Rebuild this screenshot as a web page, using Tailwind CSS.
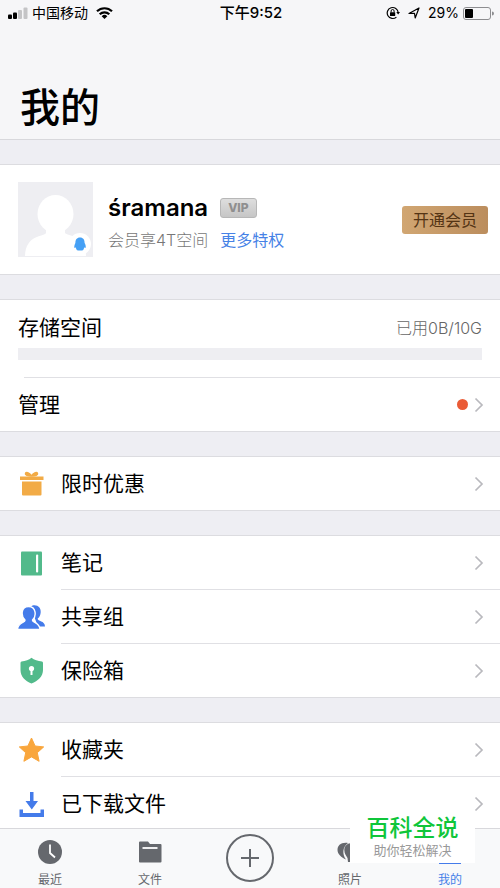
<!DOCTYPE html>
<html lang="zh-CN">
<head>
<meta charset="utf-8">
<meta name="viewport" content="width=device-width, initial-scale=1">
<title>我的</title>
<script src="https://cdn.jsdelivr.net/npm/@tailwindcss/browser@4"></script>
</head>
<body class="bg-[#eeeef3] text-black font-[Inter,'Noto_Sans_CJK_SC',sans-serif]">
<svg class="hidden">
  <symbol id="chevron" viewBox="0 0 10 16"><path d="M1.5 1.5 8 8l-6.500 6.500" fill="none" stroke="#b9b9be" stroke-width="1.700"/></symbol>
</svg>
<div class="flex min-h-screen flex-col">
  <header class="flex h-[140px] flex-col border-b border-[#d8d8dc] bg-[#f6f6f8]">
    <div class="grid grid-cols-[1fr_auto_1fr] items-center pl-2 pr-[6px] text-sm leading-[26px]">
      <div class="flex items-center">
        <svg class="mr-1 h-3 w-5" viewBox="0 0 20 12" aria-hidden="true"><rect y="7.500" width="4" height="4.500" rx="1"/><rect x="5" y="5.500" width="4" height="6.500" rx="1"/><rect x="10" y="3" width="4" height="9" rx="1" fill="#c4c4c6"/><rect x="15.500" y="0.500" width="4" height="11.500" rx="1" fill="#c4c4c6"/></svg>
        <span>中国移动</span>
        <svg class="ml-2 h-3 w-[17px]" viewBox="0 0 17 12" aria-hidden="true"><g fill="none" stroke="#000" stroke-width="2.200"><path d="M1 4.300a10.800 10.800 0 0 1 15 0"/><path d="M3.700 7.300a6.900 6.900 0 0 1 9.600 0"/></g><path d="M5.700 9.200a4 4 0 0 1 5.600 0L8.500 12z"/></svg>
      </div>
      <time class="text-[15px] leading-[26px] font-medium">下午9:52</time>
      <div class="flex items-center justify-end">
        <svg class="mr-2 h-[14px] w-[14px]" viewBox="0 0 14 14" aria-hidden="true"><path d="M12.200 6.500a5.500 5.500 0 1 0-1.800 4.600" fill="none" stroke="#000" stroke-width="1.200"/><path d="M10.300 6h3.700l-1.900 2.600z"/><rect x="4" y="6.200" width="5.200" height="3.800" rx=".5"/><path d="M5.100 6.500V5a1.500 1.500 0 0 1 3 0v1.500" fill="none" stroke="#000"/></svg>
        <svg class="mr-2 h-3 w-3" viewBox="0 0 12 12" aria-hidden="true"><path d="M1 6.500 11 1 7.200 11 6.500 6.300z" fill="none" stroke="#000" stroke-width="1.200" stroke-linejoin="round"/></svg>
        <span>29%</span>
        <svg class="ml-1 h-[13px] w-[31px]" viewBox="0 0 31 13" aria-hidden="true"><rect x=".5" y=".5" width="27" height="12" rx="2.500" fill="none" stroke="#8d8d90"/><rect x="2" y="2" width="8" height="9" rx="1"/><path d="M29 4.500a2 2 0 0 1 0 4z" fill="#8d8d90"/></svg>
      </div>
    </div>
    <h1 class="mt-auto px-5 pb-1 text-[40px] leading-[54px] font-medium">我的</h1>
  </header>

  <main class="flex flex-col gap-6 pt-6">
    <section class="flex h-[111px] items-center border-y border-[#dcdce0] bg-white pl-[18px] pr-3">
      <svg class="size-[75px] shrink-0" viewBox="0 0 75 75" role="img" aria-label="头像"><rect width="75" height="75" fill="#eeeef2"/><g fill="#fff"><ellipse cx="37.500" cy="32" rx="18" ry="19"/><path d="M28 44h19v7c2 3 22 2 21 23H7C8 52 26 55 28 51z"/><circle cx="62" cy="62" r="11"/></g><path d="M62 55.500c3.300 0 4.600 2.300 4.600 5.500 1 1.700 1.600 4 .8 5-.4.400-1-.5-1.300-1 0 1 0 1.800-.7 2.300.7 1-.8 1.200-3.400 1.200s-4.100-.2-3.400-1.200c-.7-.5-.7-1.300-.7-2.300-.3.500-.9 1.400-1.300 1-.8-1 0-3.300.8-5 0-3.200 1.300-5.500 4.600-5.500z" fill="#45a0f5"/></svg>
      <div class="ml-[15px] flex-1 pt-2">
        <div class="flex items-center gap-3">
          <h2 class="text-2xl leading-8 font-semibold">śramana</h2>
          <span class="rounded-[3px] border border-[#b7b7b7] bg-linear-to-b from-[#dedede] to-[#c6c6c6] px-[7px] text-xs leading-[18px] font-extrabold text-[#8f8f8f]">VIP</span>
        </div>
        <p class="flex gap-3 text-base leading-8 text-[#777]"><span class="font-light">会员享4T空间</span><a href="#privileges" class="text-[#4682e6]">更多特权</a></p>
      </div>
      <button class="h-7 rounded-[3px] bg-linear-to-r from-[#d1a672] to-[#bb8d5d] px-[11px] text-base leading-7 text-[#543414]">开通会员</button>
    </section>

    <section class="border-y border-[#dcdce0] bg-white">
      <div class="h-[77px] px-[18px] pt-2">
        <div class="flex items-center justify-between leading-10"><h2 class="text-[21px] leading-10">存储空间</h2><span class="text-base leading-10 font-light text-[#666]">已用0B/10G</span></div>
        <div class="h-3 bg-[#eeeef2]" role="progressbar" aria-label="存储空间" aria-valuenow="0"></div>
      </div>
      <div class="ml-6 h-px bg-[#e0e0e4]"></div>
      <a href="#manage" class="flex h-[53px] items-center pr-4 pl-[18px] text-[21px]"><span class="flex-1">管理</span><i class="mr-[6px] size-[11px] rounded-full bg-[#ea5b36]"></i><svg class="h-4 w-[10px]"><use href="#chevron"/></svg></a>
    </section>

    <section class="border-y border-[#dcdce0] bg-white">
      <a href="#offers" class="flex h-[53px] items-center pl-[18px] text-[21px]">
        <svg class="mr-4 size-[27px]" viewBox="0 0 27 27" aria-hidden="true"><path d="M2 6.500h23.500V10H2zM4 11.500h19.500v13q0 1-1 1H5q-1 0-1-1z" fill="#f2ab46"/><path d="M13.500 6C11 2 8 2 7.500 3.500S9.500 6 13.500 6zm0 0c2.500-4 5.500-4 6-2.500S17.500 6 13.500 6z" fill="#f2ab46" stroke="#f2ab46" stroke-width="1.500"/></svg>
        <span class="flex-1">限时优惠</span><svg class="mr-4 h-4 w-[10px]"><use href="#chevron"/></svg></a>
    </section>

    <section class="border-t border-[#dcdce0] bg-white">
      <a href="#notes" class="flex h-[54px] pl-[18px] text-[21px]">
        <svg class="mr-4 size-[27px] self-center" viewBox="0 0 27 27" aria-hidden="true"><rect x="3" y="1.500" width="21" height="24" rx="1" fill="#52ba8b"/><rect x="18" y="4.500" width="2.200" height="18" rx="1" fill="#fff"/></svg>
        <span class="flex flex-1 items-center border-b border-[#e0e0e4] pr-4"><span class="flex-1">笔记</span><svg class="h-4 w-[10px]"><use href="#chevron"/></svg></span></a>
      <a href="#groups" class="flex h-[54px] pl-[18px] text-[21px]">
        <svg class="mr-4 size-[27px] self-center" viewBox="0 0 27 27" aria-hidden="true"><g fill="#447bea"><path d="M12.500 3C14 1.500 15 1.200 16.500 1.200c4 0 6.500 3 6.200 7-.2 3-1.200 5-3 6.300-.3 3 7.300 2 7.300 8H20z"/><path d="M10.500 2.500c8 0 8 10 4 13.500-.5 3 7 2 7.500 9.500H-.5C0 18 7.500 19 7 16 3 12.500 2.500 2.500 10.500 2.500z" stroke="#fff" stroke-width="1.400"/></g></svg>
        <span class="flex flex-1 items-center border-b border-[#e0e0e4] pr-4"><span class="flex-1">共享组</span><svg class="h-4 w-[10px]"><use href="#chevron"/></svg></span></a>
      <a href="#safe" class="flex h-[54px] border-b border-[#dcdce0] pl-[18px] text-[21px]">
        <svg class="mr-4 size-[27px] self-center" viewBox="0 0 27 27" aria-hidden="true"><path d="M13.500.8C16 3 20 4.300 24 4.500q1 .2 1 1.500v7c0 6.500-5 11-11.500 13.500C7 24 2.500 19.500 2.500 13V6q0-1.300 1-1.500C7.500 4.300 11 3 13.500.8z" fill="#52ba8b"/><circle cx="13.500" cy="11.500" r="2.600" fill="#fff"/><path d="M12.500 12h2v6h-2z" fill="#fff"/></svg>
        <span class="flex flex-1 items-center pr-4"><span class="flex-1">保险箱</span><svg class="h-4 w-[10px]"><use href="#chevron"/></svg></span></a>
    </section>

    <section class="border-t border-[#dcdce0] bg-white">
      <a href="#favorites" class="flex h-[54px] pl-[18px] text-[21px]">
        <svg class="mr-4 size-[27px] self-center" viewBox="0 0 27 27" aria-hidden="true"><path d="m13.500 1 3.600 8 8.600.9-6.400 5.800 1.800 8.600-7.600-4.400-7.600 4.400 1.800-8.600L1.300 9.900l8.600-.9z" fill="#f9a63c" stroke="#f9a63c" stroke-linejoin="round"/></svg>
        <span class="flex flex-1 items-center border-b border-[#e0e0e4] pr-4"><span class="flex-1">收藏夹</span><svg class="h-4 w-[10px]"><use href="#chevron"/></svg></span></a>
      <a href="#downloads" class="flex h-[54px] pl-[18px] text-[21px]">
        <svg class="mr-4 size-[27px] self-center" viewBox="0 0 27 27" aria-hidden="true"><path d="M12 1h3.500v9H20l-6.200 8.500L7.500 10H12zM1.500 18.500H5v3.500h17.500v-3.500H26V26H1.500z" fill="#447bea"/></svg>
        <span class="flex flex-1 items-center pr-4"><span class="flex-1">已下载文件</span><svg class="h-4 w-[10px]"><use href="#chevron"/></svg></span></a>
    </section>
  </main>
</div>

<nav class="fixed inset-x-0 bottom-0 grid h-[60px] grid-cols-5 border-t border-[#d8d8dc] bg-[#f8f9fa] text-xs leading-4 text-[#65686d]">
  <a href="#recent" class="flex flex-col items-center justify-between pt-[11px]"><svg class="size-6" viewBox="0 0 24 24" aria-hidden="true"><circle cx="12" cy="12" r="12" fill="#65686d"/><path d="M12 4.500V13l5 4.500" fill="none" stroke="#fff" stroke-width="1.800"/></svg>最近</a>
  <a href="#files" class="flex flex-col items-center justify-between pt-[11px]"><svg class="size-6" viewBox="0 0 24 24" aria-hidden="true"><path d="M1 2.500q0-1 1-1h8L12 4h10.500q1 0 1 1v16.500q0 1-1 1H2q-1 0-1-1z" fill="#65686d"/><path d="M4.500 8h15" stroke="#fff" stroke-width="1.800"/></svg>文件</a>
  <button class="flex justify-center pt-[5px]" aria-label="添加"><svg class="size-12" viewBox="0 0 48 48" aria-hidden="true"><circle cx="24" cy="24" r="23" fill="none" stroke="#65686d" stroke-width="2"/><path d="M24 15v18M15 24h18" stroke="#65686d" stroke-width="2"/></svg></button>
  <a href="#photos" class="flex flex-col items-center justify-between pt-[11px]"><svg class="size-6 overflow-visible" viewBox="0 0 24 24" aria-hidden="true"><path d="M10 3C3 2-.5 5.500-.5 10c0 4 4 7.500 8.500 9.500C4 14 4.500 7 10 3z" fill="#65686d"/><path d="M15 3C8.500 3 6.300 6.500 6.300 10c0 4 2.200 6 3.200 8l.5 4h3c0-3 10.500-5 10.500-12 0-4-3-7-8.500-7z" fill="#65686d"/></svg>照片</a>
  <a href="#mine" aria-current="page" class="flex flex-col items-center justify-between pt-[11px] text-[#4480e8]"><svg class="size-6" viewBox="0 0 24 24" aria-hidden="true"><circle cx="12" cy="7" r="6" fill="#447bea"/><path d="M1 24c0-8 4-10 11-10s11 2 11 10z" fill="#447bea"/></svg>我的</a>
</nav>

<aside class="fixed right-[25px] bottom-[25px] flex h-[51px] w-[125px] flex-col items-center bg-white pt-[2px]">
  <strong class="text-[23px] leading-7 font-medium text-[#0fc63a]">百科全说</strong>
  <span class="text-[13px] leading-4 text-[#999]">助你轻松解决</span>
</aside>
</body>
</html>
